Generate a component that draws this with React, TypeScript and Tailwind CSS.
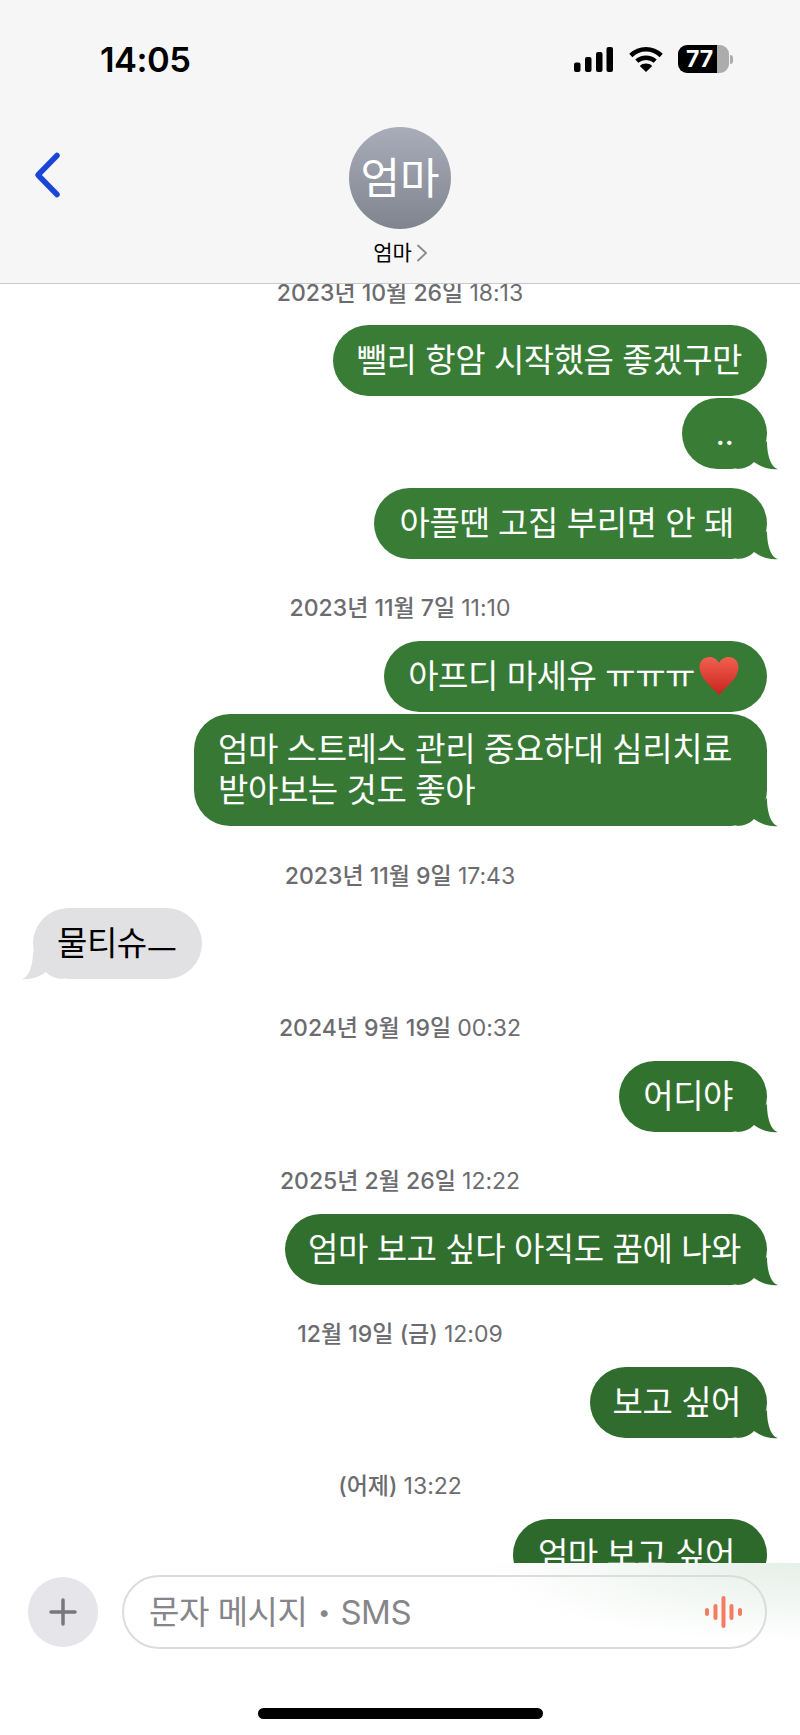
import React from "react";

const KR = "font-['Inter','Noto_Sans_CJK_KR',sans-serif]";

function Stamp({ date, time, className }: { date?: string; time: string; className: string }) {
  return (
    <div className={`h-[28px] text-center text-[23px] leading-[28px] text-[#6c6c70] whitespace-nowrap ${className}`}>
      {date ? <span className="font-medium">{date} </span> : null}
      <span>{time}</span>
    </div>
  );
}

function TailRight({ color }: { color: string }) {
  return (
    <svg className="absolute right-[-11px] bottom-0 overflow-visible" width="30" height="28" viewBox="0 0 30 28">
      <path d="M19 0C19 12 22 26 30 28C22 29 13 26 6 21C3 24.500-3 28-12 28Z" fill={color} />
    </svg>
  );
}

function Sent({ children, color, bg, tail = true, className = "" }: { children: React.ReactNode; color: string; bg: string; tail?: boolean; className?: string }) {
  return (
    <div className={`relative self-end mr-[33px] rounded-[36px] py-[15px] text-[33px] leading-[41px] tracking-[-0.45px] text-white whitespace-nowrap ${bg} ${className}`}>
      {children}
      {tail ? <TailRight color={color} /> : null}
    </div>
  );
}

function Heart() {
  return (
    <svg className="inline-block align-[-8px] ml-[3px]" width="42" height="40" viewBox="0 0 42 40">
      <defs>
        <linearGradient id="h" x1="0" y1="0" x2="0" y2="1">
          <stop offset="0" stopColor="#f2604f" />
          <stop offset="1" stopColor="#c9231c" />
        </linearGradient>
      </defs>
      <path d="M21 39C14 31 1.500 22 1.500 11.500C1.500 5 6 1 11.500 1C16 1 19 3.500 21 7C23 3.500 26 1 30.500 1C36 1 40.500 5 40.500 11.500C40.500 22 28 31 21 39Z" fill="url(#h)" />
    </svg>
  );
}

export default function App() {
  return (
    <div className={`flex h-[1735px] w-[800px] flex-col overflow-hidden bg-white ${KR}`}>
      <header className="relative h-[284px] shrink-0 border-b border-[#c9c9c9] bg-[#f6f6f6]">
        <div className="flex h-[122px] items-start justify-between pl-[100px] pr-[67px] pt-[40px]">
          <span className="text-[34.5px] font-semibold leading-[40px] text-black tracking-[-0.5px]">14:05</span>
          <div className="mt-[5px] flex items-center">
            <svg width="39" height="25" viewBox="0 0 39 25">
              <rect x="0" y="15.500" width="6.500" height="9.500" rx="2" />
              <rect x="11" y="10" width="6.500" height="15" rx="2" />
              <rect x="22" y="5" width="6.500" height="20" rx="2" />
              <rect x="32.500" y="0" width="6.500" height="25" rx="2" />
            </svg>
            <svg className="ml-[16px]" width="34" height="25" viewBox="0 0 34 25" fill="none" stroke="#000" strokeWidth="4.500">
              <path d="M1.800 8.500C10.500 0.200 23.500 0.200 32.200 8.500" />
              <path d="M7.800 14.200C13 9.500 21 9.500 26.200 14.200" />
              <path d="M17 25L10.800 19C14.500 15.800 19.500 15.800 23.200 19Z" fill="#000" stroke="none" />
            </svg>
            <div className="ml-[15px] flex h-[28px] w-[51px] items-center rounded-[9px] bg-[linear-gradient(90deg,#000_76%,#acacac_76%)] pl-[8px]">
              <span className="text-[23px] font-bold leading-none text-white">77</span>
            </div>
            <div className="ml-[1px] h-[9px] w-[3px] rounded-r-full bg-[#acacac]" />
          </div>
        </div>
        <svg className="absolute left-[32px] top-[151px]" width="30" height="48" viewBox="0 0 30 48" fill="none" stroke="#1a45d9" strokeWidth="5.500" strokeLinecap="round" strokeLinejoin="round">
          <path d="M25 4.500L6 24L25 43.500" />
        </svg>
        <div className="flex flex-col items-center pt-[5px]">
          <div className="flex h-[102px] w-[102px] items-center justify-center rounded-full bg-[linear-gradient(180deg,#a9adb9,#7f848f)] text-[43px] leading-none text-white">
            엄마
          </div>
          <div className="mt-[11px] flex items-center pl-[1px] text-[21px] leading-[26px] text-black">
            엄마
            <svg className="ml-[4px]" width="12" height="18" viewBox="0 0 12 18" fill="none" stroke="#8a8a8e" strokeWidth="1.800" strokeLinecap="round" strokeLinejoin="round">
              <path d="M2 1.500L10 9L2 16.500" />
            </svg>
          </div>
        </div>
      </header>

      <main className="flex min-h-0 flex-1 flex-col overflow-hidden">
        <Stamp className="mt-[-5px]" date="2023년 10월 26일" time="18:13" />
        <Sent className="mt-[18px] pl-[24px] pr-[25px]" bg="bg-[#387c36]" color="#387c36" tail={false}>뺄리 항암 시작했음 좋겠구만</Sent>
        <Sent className="mt-[2px] w-[85px] text-center" bg="bg-[#387c36]" color="#387c36">..</Sent>
        <Sent className="mt-[19px] pl-[26px] pr-[33px]" bg="bg-[#387c36]" color="#387c36">아플땐 고집 부리면 안 돼</Sent>

        <Stamp className="mt-[35px]" date="2023년 11월 7일" time="11:10" />
        <Sent className="mt-[19px] pl-[24px] pr-[27px]" bg="bg-[#377a35]" color="#377a35" tail={false}>아프디 마세유 ㅠㅠㅠ<Heart /></Sent>
        <Sent className="mt-[2px] pl-[24px] pr-[35px]" bg="bg-[#367834]" color="#367834">
          엄마 스트레스 관리 중요하대 심리치료
          <br />
          받아보는 것도 좋아
        </Sent>

        <Stamp className="mt-[36px]" date="2023년 11월 9일" time="17:43" />
        <div className="relative ml-[33px] mt-[18px] self-start rounded-[36px] bg-[#e1e1e4] pl-[24px] pr-[25px] py-[15px] text-[33px] leading-[41px] tracking-[-0.45px] text-black whitespace-nowrap">
          물티슈<span className="inline-block align-[-7px] leading-[20px]">ㅡ</span>
          <svg className="absolute left-[-11px] bottom-0 overflow-visible" width="30" height="28" viewBox="0 0 30 28">
            <path d="M11 0C11 12 8 26 0 28C8 29 17 26 24 21C27 24.500 33 28 42 28Z" fill="#e1e1e4" />
          </svg>
        </div>

        <Stamp className="mt-[35px]" date="2024년 9월 19일" time="00:32" />
        <Sent className="mt-[19px] pl-[24px] pr-[34px]" bg="bg-[#32722f]" color="#32722f">어디야</Sent>

        <Stamp className="mt-[35px]" date="2025년 2월 26일" time="12:22" />
        <Sent className="mt-[19px] pl-[23px] pr-[26px]" bg="bg-[#306f2e]" color="#306f2e">엄마 보고 싶다 아직도 꿈에 나와</Sent>

        <Stamp className="mt-[35px]" date="12월 19일 (금)" time="12:09" />
        <Sent className="mt-[19px] pl-[23px] pr-[26px]" bg="bg-[#2f6c2d]" color="#2f6c2d">보고 싶어</Sent>

        <Stamp className="mt-[34px]" date="(어제)" time="13:22" />
        <Sent className="mt-[19px] pl-[25px] pr-[32px]" bg="bg-[#2d692b]" color="#2d692b" tail={false}>엄마 보고 싶어</Sent>
      </main>

      <footer className="h-[172px] shrink-0 bg-white bg-[radial-gradient(320px_80px_at_100%_0,#e6efe8,#ffffff)]">
        <div className="flex items-center pl-[28px] pt-[12px]">
          <div className="flex h-[70px] w-[70px] shrink-0 items-center justify-center rounded-full bg-[#e6e6ea]">
            <svg width="28" height="28" viewBox="0 0 28 28" stroke="#77777c" strokeWidth="3.500" strokeLinecap="round">
              <path d="M14 2V26M2 14H26" />
            </svg>
          </div>
          <div className="ml-[24px] flex h-[74px] w-[645px] items-center justify-between rounded-[37px] border-2 border-[#dcdcdc] pl-[25px] pr-[23px]">
            <span className="flex items-center text-[33px] leading-none tracking-[-0.45px] text-[#86868a]">
              문자 메시지
              <span className="w-[33px] text-center text-[22px]">•</span>
              SMS
            </span>
            <svg width="37" height="32" viewBox="0 0 37 32" fill="#f47c62">
              <rect x="0" y="12" width="4" height="8" rx="2" />
              <rect x="8.500" y="8" width="4" height="16" rx="2" />
              <rect x="16.500" y="0" width="4" height="32" rx="2" />
              <rect x="24.500" y="8" width="4" height="16" rx="2" />
              <rect x="33" y="12" width="4" height="8" rx="2" />
            </svg>
          </div>
        </div>
        <div className="mx-auto mt-[59px] h-[11px] w-[285px] rounded-full bg-black" />
      </footer>
    </div>
  );
}
